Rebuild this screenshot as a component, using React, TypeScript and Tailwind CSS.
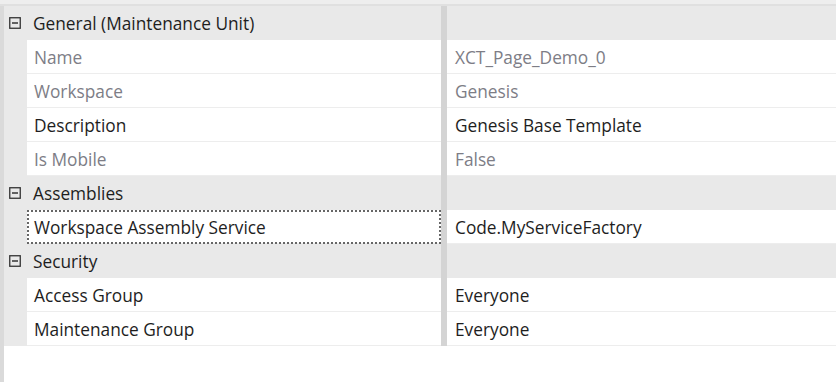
import React from "react";

type Row = { label: string; value: string; readOnly?: boolean; focused?: boolean };
type Group = { title: string; rows: Row[] };

const groups: Group[] = [
  {
    title: "General (Maintenance Unit)",
    rows: [
      { label: "Name", value: "XCT_Page_Demo_0", readOnly: true },
      { label: "Workspace", value: "Genesis", readOnly: true },
      { label: "Description", value: "Genesis Base Template" },
      { label: "Is Mobile", value: "False", readOnly: true },
    ],
  },
  {
    title: "Assemblies",
    rows: [{ label: "Workspace Assembly Service", value: "Code.MyServiceFactory", focused: true }],
  },
  {
    title: "Security",
    rows: [
      { label: "Access Group", value: "Everyone" },
      { label: "Maintenance Group", value: "Everyone" },
    ],
  },
];

function MinusBox() {
  return (
    <svg width="12" height="12" viewBox="0 0 12 12" className="shrink-0">
      <rect x="0.75" y="0.75" width="10.5" height="10.5" fill="none" stroke="#333" strokeWidth="1.3" />
      <line x1="3" y1="6" x2="9" y2="6" stroke="#333" strokeWidth="1.5" />
    </svg>
  );
}

export default function App() {
  return (
    <div
      className="w-[836px] h-[382px] bg-white flex flex-col overflow-hidden text-[17.3px]"
      style={{ fontFamily: '"Open Sans", "Noto Sans", sans-serif' }}
    >
      <div className="h-[4px] bg-[#eeeeee] shrink-0" />
      <div className="h-[2px] bg-[#e0e0e0] shrink-0" />
      <div className="flex flex-1">
        <div className="w-[4px] bg-[#dadada] shrink-0" />
        <div className="flex-1 flex flex-col">
          {groups.map((g) => (
            <div key={g.title} className="flex flex-col">
              <div className="h-[34px] flex bg-[#e9e9e9]">
                <div className="w-[437px] flex items-center pl-[5px] gap-[12px] text-[#1e1e1e]">
                  <MinusBox />
                  <span className="pt-[2px]">{g.title}</span>
                </div>
                <div className="w-[6px] bg-[#d4d4d4]" />
                <div className="flex-1" />
              </div>
              {g.rows.map((r) => (
                <div key={r.label} className="h-[34px] flex bg-[#e9e9e9]">
                  <div className="w-[23px] shrink-0" />
                  <div
                    className={
                      "w-[414px] flex items-center pl-[7px] pt-[2px] bg-white border-b border-[#ededed] " +
                      (r.focused ? "outline-2 outline-dotted outline-[#666] -outline-offset-2 " : "") +
                      (r.readOnly ? "text-[#7d7d86]" : "text-[#1e1e1e]")
                    }
                  >
                    {r.label}
                  </div>
                  <div className="w-[6px] bg-[#d4d4d4]" />
                  <div
                    className={
                      "flex-1 flex items-center pl-[8px] pt-[2px] bg-white border-b border-[#ededed] " +
                      (r.readOnly ? "text-[#7d7d86]" : "text-[#1e1e1e]")
                    }
                  >
                    {r.value}
                  </div>
                </div>
              ))}
            </div>
          ))}
          <div className="flex-1 bg-white" />
        </div>
      </div>
    </div>
  );
}
